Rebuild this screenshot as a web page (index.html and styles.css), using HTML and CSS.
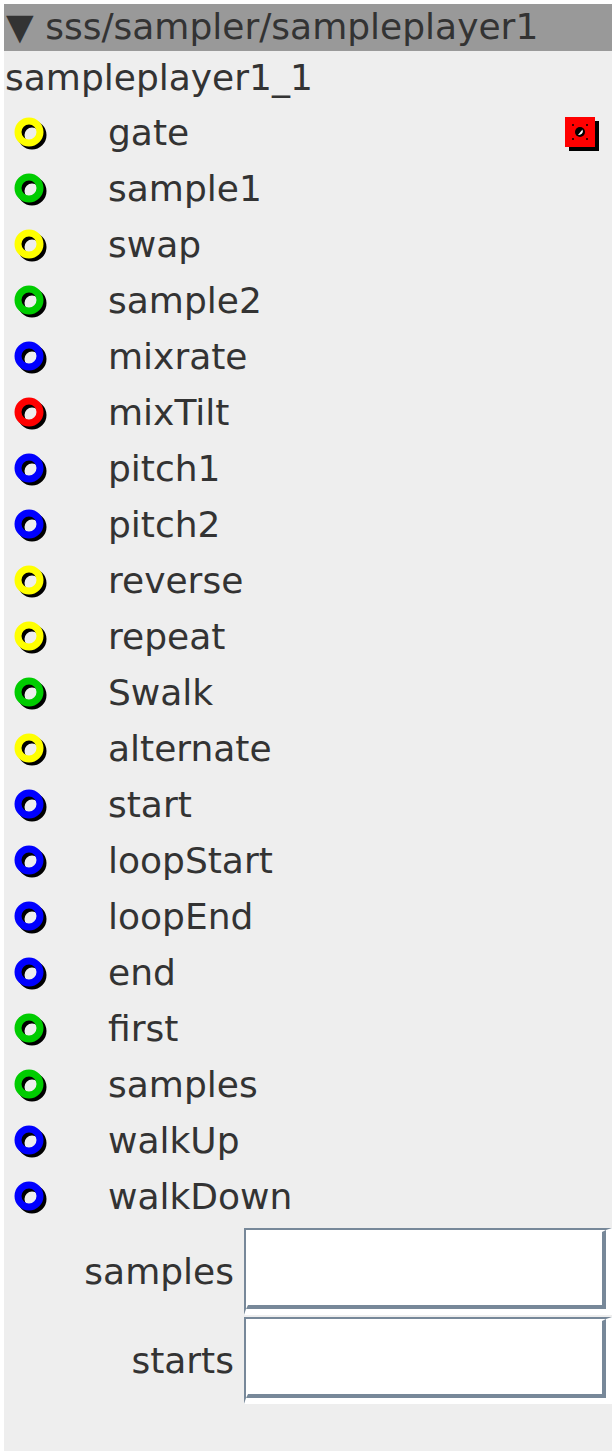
FILE: index.html
```html
<!DOCTYPE html>
<html lang="en">
<head>
  <meta charset="UTF-8">
  <title>sss/sampler/sampleplayer1</title>
  <link rel="stylesheet" href="styles.css">
</head>
<body>
  <div class="panel">
    <div class="title">&#9660; sss/sampler/sampleplayer1</div>
    <div class="subtitle">sampleplayer1_1</div>
    <div id="ports"></div>
    <div class="fields">
      <label class="field-label">samples</label>
      <div class="field-outer"><div class="field-inner"></div></div>
      <label class="field-label">starts</label>
      <div class="field-outer"><div class="field-inner"></div></div>
    </div>
  </div>
  <script>
    var colors = { y: '#ffff00', g: '#00cc00', b: '#0000ff', r: '#ff0000' };
    var ports = [
      ['gate', 'y'], ['sample1', 'g'], ['swap', 'y'], ['sample2', 'g'],
      ['mixrate', 'b'], ['mixTilt', 'r'], ['pitch1', 'b'], ['pitch2', 'b'],
      ['reverse', 'y'], ['repeat', 'y'], ['Swalk', 'g'], ['alternate', 'y'],
      ['start', 'b'], ['loopStart', 'b'], ['loopEnd', 'b'], ['end', 'b'],
      ['first', 'g'], ['samples', 'g'], ['walkUp', 'b'], ['walkDown', 'b']
    ];
    var html = '';
    for (var i = 0; i < ports.length; i++) {
      var c = colors[ports[i][1]];
      html += '<div class="port">' +
        '<svg class="ring" width="36" height="36" viewBox="0 0 36 36">' +
        '<circle cx="18" cy="18" r="11" fill="none" stroke="#000" stroke-width="7"/>' +
        '<circle cx="15" cy="15" r="11" fill="none" stroke="' + c + '" stroke-width="7"/>' +
        '</svg>' +
        '<span class="port-name">' + ports[i][0] + '</span>';
      if (i === 0) {
        html += '<svg class="out" width="34" height="34" viewBox="0 0 34 34">' +
          '<rect x="4" y="4" width="30" height="30" fill="#000"/>' +
          '<rect x="0" y="0" width="30" height="30" fill="#ff0000"/>' +
          '<rect x="7" y="7" width="2" height="2" fill="#400"/>' +
          '<rect x="21" y="7" width="2" height="2" fill="#400"/>' +
          '<rect x="7" y="21" width="2" height="2" fill="#400"/>' +
          '<rect x="21" y="21" width="2" height="2" fill="#400"/>' +
          '<circle cx="15" cy="15" r="5" fill="#000"/>' +
          '<path d="M17.5 12.5 A4 4 0 0 1 13 18 Z" fill="#fff"/>' +
          '</svg>';
      }
      html += '</div>';
    }
    document.getElementById('ports').innerHTML = html;
  </script>
</body>
</html>
```

FILE: styles.css
```css
body {
  margin: 4px;
  background-color: #fff;
  font-family: "DejaVu Sans", Verdana, sans-serif;
  font-size: 36px;
  color: #333;
}
.panel {
  background-color: #eee;
  height: 1447px;
}
.title {
  background-color: #999;
  height: 47px;
  line-height: 45px;
  padding-left: 2px;
  white-space: nowrap;
}
.subtitle {
  height: 53px;
  line-height: 53px;
  padding-left: 1px;
}
.port {
  display: flex;
  align-items: center;
  height: 56px;
}
.ring {
  margin: 6px 0 0 10px;
  flex: none;
}
.port-name {
  margin-left: 58px;
}
.out {
  margin: 4px 13px 0 auto;
}
.fields {
  display: grid;
  grid-template-columns: 230px 1fr;
  column-gap: 10px;
  row-gap: 2px;
  margin-top: 4px;
}
.field-label {
  text-align: right;
  align-self: center;
}
.field-outer {
  height: 87px;
  box-sizing: border-box;
  border-style: solid;
  border-width: 2px 6px 6px 2px;
  border-color: #778899 #fff #fff #778899;
}
.field-inner {
  height: 100%;
  box-sizing: border-box;
  background-color: #fff;
  border-style: solid;
  border-width: 2px 4px 4px 2px;
  border-color: #fff #778899 #778899 #fff;
}
```
